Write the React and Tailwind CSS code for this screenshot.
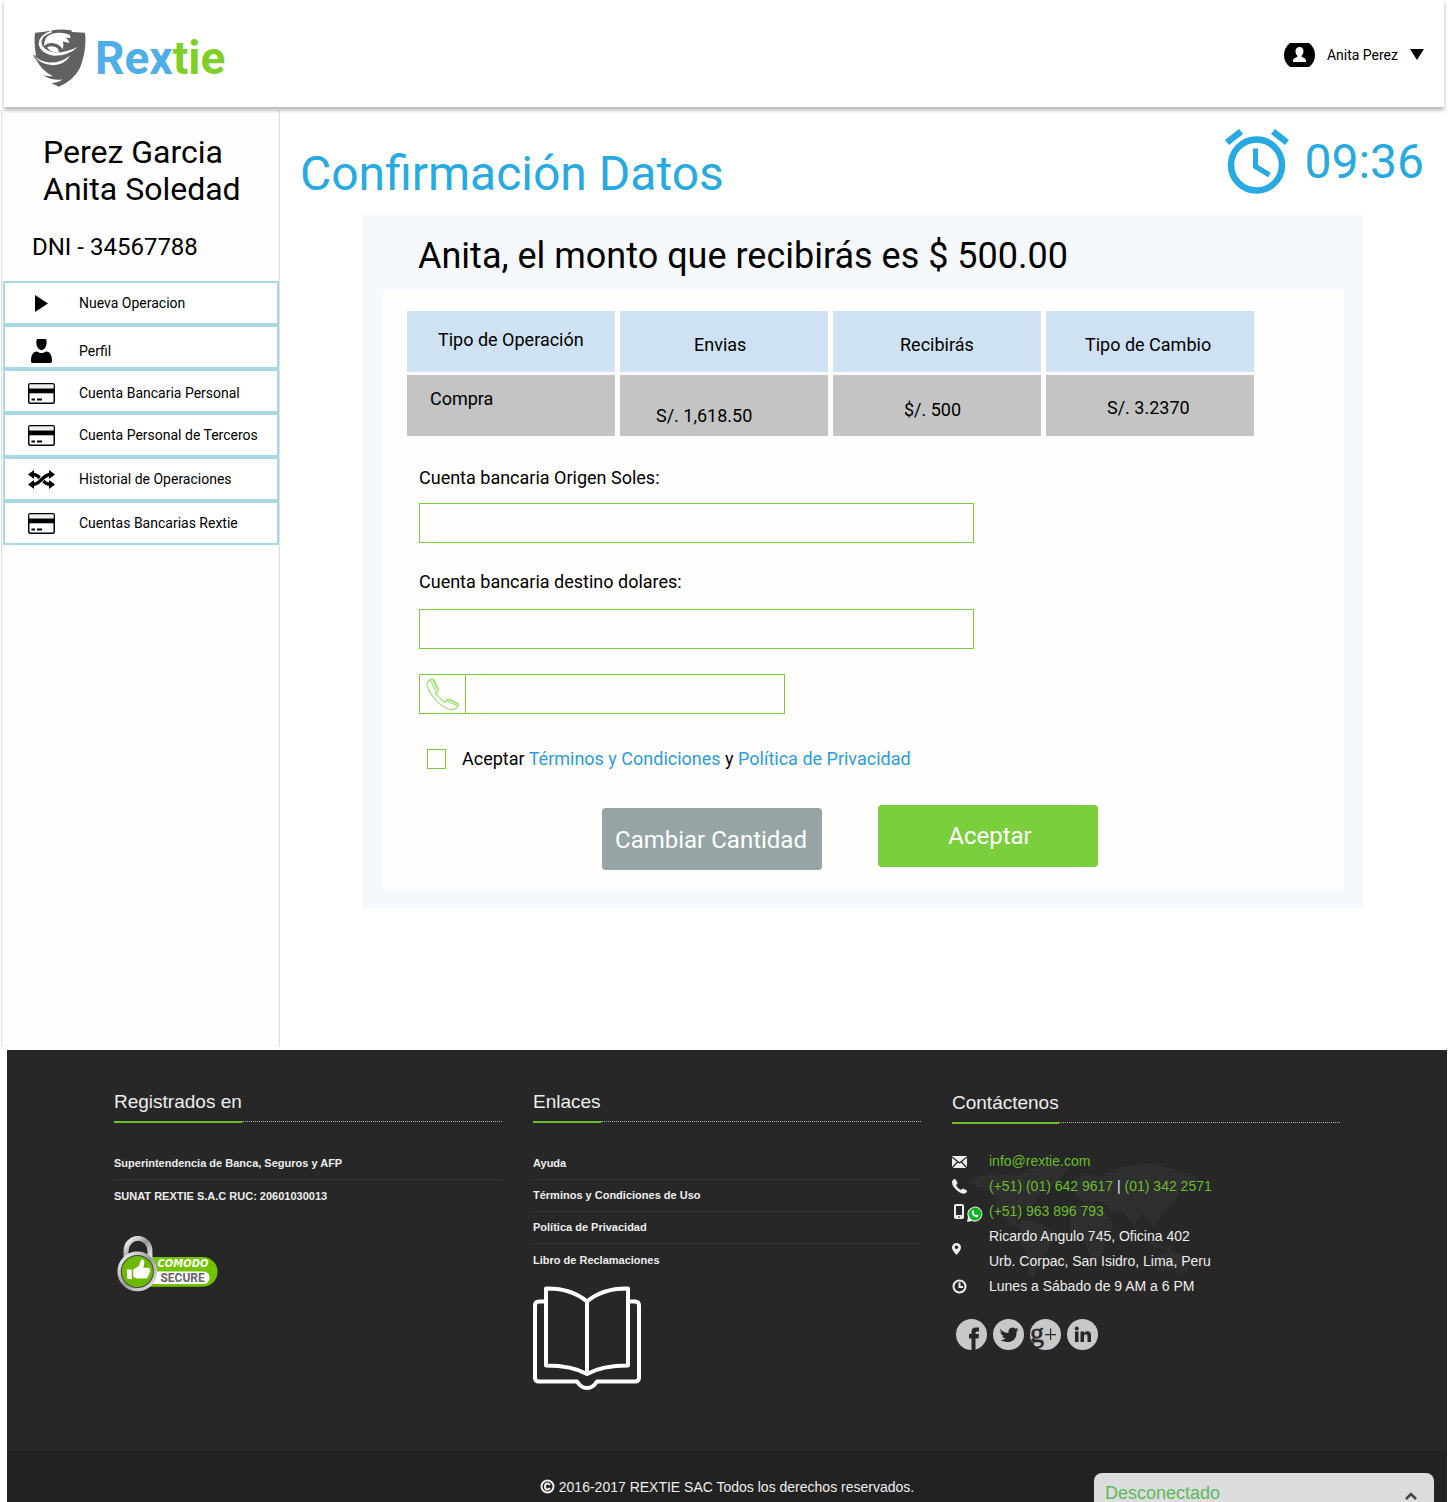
import React from "react";

const roboto = "font-[Roboto,sans-serif]";
const arial = "font-['Liberation_Sans',Arial,sans-serif]";

function Shield() {
  return (
    <svg viewBox="98 86 158 173" className="h-[58px] w-[53px] shrink-0" aria-hidden="true">
      <path fill="#636061" d="M104 97Q125 96 150 91Q180 84 212 90L214 95L253 97Q259 150 238 202Q218 240 175 258L153 248Q172 247 187 237Q150 240 128 223Q146 228 156 226Q122 208 111 182Q101 172 98 163L107 166Q100 130 104 97Z" />
      <path fill="#fff" d="M152 91Q116 103 115 130Q118 158 160 166Q205 166 232 139Q200 156 165 157Q127 151 123 128Q123 106 155 96Z" />
      <path fill="#fff" d="M132 126Q134 106 156 100Q182 93 207 103Q212 110 208 113L195 112Q204 117 207 128L187 123Q191 135 187 146Q172 126 150 128Q138 130 131 137Z" />
      <path fill="#fff" d="M140 140Q158 134 170 143Q176 149 175 157Q150 158 140 140Z" />
      <path fill="#fff" d="M99 162Q115 182 145 186Q180 188 209 165Q192 193 157 194Q118 193 99 162Z" />
    </svg>
  );
}

function CardIcon() {
  return (
    <svg viewBox="0 0 27 21" className="h-[21px] w-[27px]" aria-hidden="true">
      <rect x="0.75" y="0.75" width="25.5" height="19.5" rx="1.5" fill="#fff" stroke="#000" strokeWidth="1.500" />
      <path d="M1.500 1.500h24v3.500h-24z" fill="#eee" />
      <path d="M0 5.500h27v4.800H0z" />
      <path d="M3.500 15.500h3.500v2H3.500zM9 15.500h5v2H9z" />
    </svg>
  );
}

function PlayIcon() {
  return (
    <svg viewBox="0 0 13 17" className="h-[17px] w-[13px]" aria-hidden="true">
      <path d="M0 0l13 8.500L0 17z" />
    </svg>
  );
}

function PersonIcon() {
  return (
    <svg viewBox="0 0 21 24" className="h-6 w-[21px]" aria-hidden="true">
      <path d="M6 0h9c1 2 1 5-.2 7.500C14 9.500 12.500 11 10.500 11S7 9.500 6.200 7.500C5 5 5 2 6 0zM0 22c0-5 1.500-9.500 6-9.500 1 .8 2.500 1.500 4.500 1.500s3.500-.7 4.500-1.500c4.500 0 6 4.500 6 9.500 0 1.500-.8 2-2 2H2c-1.200 0-2-.5-2-2z" />
    </svg>
  );
}

function ShuffleIcon() {
  return (
    <svg viewBox="0 0 27 19" className="h-[19px] w-[27px]" fill="none" stroke="#000" strokeWidth="3.500" aria-hidden="true">
      <path d="M4.500 4.500C13 4 14 15 23 14.500" />
      <path d="M8 14.500C13 14 14 5 19 4.500" stroke="#fff" strokeWidth="5" />
      <path d="M4.500 14.500C13 15 14 4 23 4.500" />
      <path d="M0 4.500L6 0v9zM0 14.500L6 10v9zM27 4.500L21 0v9zM27 14.500L21 10v9z" fill="#000" stroke="none" />
    </svg>
  );
}

const menu = [
  { label: "Nueva Operacion", icon: PlayIcon, pad: "" },
  { label: "Perfil", icon: PersonIcon, pad: "pt-2" },
  { label: "Cuenta Bancaria Personal", icon: CardIcon, pad: "pt-1" },
  { label: "Cuenta Personal de Terceros", icon: CardIcon, pad: "" },
  { label: "Historial de Operaciones", icon: ShuffleIcon, pad: "" },
  { label: "Cuentas Bancarias Rextie", icon: CardIcon, pad: "" },
];

function Header() {
  return (
    <header className="relative mx-1 flex h-[107px] items-center justify-between bg-white pr-5 pl-[29px] shadow-[0_3px_4px_rgba(0,0,0,0.3)]">
      <a href="#inicio" className="flex items-center gap-[9px] pt-2">
        <Shield />
        <span className="text-[46px] leading-[58px] font-bold text-[#4faee8]">
          Rex<span className="text-[#7ed027]">tie</span>
        </span>
      </a>
      <button type="button" className="flex items-center gap-3 pt-0.5 text-sm">
        <svg viewBox="0 0 31 24" className="h-6 w-[31px]" aria-hidden="true">
          <path d="M6 0h19c4 3 6 7 6 12s-2 9-6 12H6c-4-3-6-7-6-12S2 3 6 0z" />
          <path fill="#fff" d="M15.500 4c2.600 0 4 1.700 4 4 0 2-.8 3.600-1.800 4.500v1.500c2 .8 4.300 1.500 4.300 3.500V19H9v-1.500c0-2 2.300-2.700 4.300-3.500v-1.500c-1-.9-1.800-2.500-1.800-4.500 0-2.300 1.400-4 4-4z" />
        </svg>
        <span>Anita Perez</span>
        <svg viewBox="0 0 14 11" className="h-[11px] w-[14px]" aria-hidden="true">
          <path d="M0 0h14L7 11z" />
        </svg>
      </button>
    </header>
  );
}

function Sidebar() {
  return (
    <aside className="w-[279px] shrink-0 border-x border-[#e0e0e0] bg-[#fefefe] shadow-[inset_0_0_4px_rgba(0,0,0,0.06)]">
      <h2 className="pt-6 pl-[41px] text-[32px] leading-[37px]">
        Perez Garcia
        <br />
        Anita Soledad
      </h2>
      <p className="pt-[25px] pl-[30px] text-2xl leading-7">DNI - 34567788</p>
      <nav className="mt-5 ml-px">
        <ul>
          {menu.map(({ label, icon: Icon, pad }) => (
            <li key={label}>
              <a href="#menu" className={"flex h-11 items-center border-2 border-[#a9d8e5] bg-white text-sm " + pad}>
                <span className="flex w-[74px] shrink-0 justify-center pr-0.5">
                  <Icon />
                </span>
                <span className="whitespace-nowrap">{label}</span>
              </a>
            </li>
          ))}
        </ul>
      </nav>
    </aside>
  );
}

function Clock() {
  return (
    <svg viewBox="0 0 64 65" className="h-[65px] w-16" fill="none" stroke="#27aae1" aria-hidden="true">
      <circle cx="31.500" cy="36" r="25.500" strokeWidth="6.500" />
      <path d="M30.500 19.500v18l14 8.500" strokeWidth="5" />
      <path d="M2 13.500L16 2.500M62 13.500L48 2.500" strokeWidth="6.500" />
    </svg>
  );
}

const th = "h-[61px] w-[208px] bg-[#cfe2f3] p-0 text-left align-top font-normal leading-6 ";
const td = "h-[61px] w-[208px] bg-[#c4c4c4] p-0 text-left align-top leading-6 ";

function Confirmation() {
  return (
    <section className="mr-[85px] ml-[82px] bg-[#f5f9fd] pr-[19px] pb-[19px] pl-[21px]">
      <h2 className="pt-5 pb-3 pl-[35px] text-4xl leading-[42px]">Anita, el monto que recibirás es $ 500.00</h2>
      <form className="bg-[#fffefd] px-[19px] py-[19px] text-lg">
        <table className="border-separate border-spacing-x-[5px] border-spacing-y-[3px]">
          <thead>
            <tr>
              <th className={th + "pt-[17px] pl-[31px]"}>Tipo de Operación</th>
              <th className={th + "pt-[22px] pl-[74px]"}>Envias</th>
              <th className={th + "pt-[22px] pl-[67px]"}>Recibirás</th>
              <th className={th + "pt-[22px] pl-[39px]"}>Tipo de Cambio</th>
            </tr>
          </thead>
          <tbody>
            <tr>
              <td className={td + "pt-3 pl-[23px]"}>Compra</td>
              <td className={td + "pt-[29px] pl-9"}>S/. 1,618.50</td>
              <td className={td + "pt-[23px] pl-[71px]"}>$/. 500</td>
              <td className={td + "pt-[21px] pl-[61px]"}>S/. 3.2370</td>
            </tr>
          </tbody>
        </table>
        <div className="pl-[17px]">
          <label htmlFor="origen" className="mt-[27px] block leading-6">Cuenta bancaria Origen Soles:</label>
          <input id="origen" type="text" className="mt-[13px] block h-10 w-full max-w-[555px] border border-[#7acd3d] bg-transparent px-3 outline-none" />
          <label htmlFor="destino" className="mt-[27px] block leading-6">Cuenta bancaria destino dolares:</label>
          <input id="destino" type="text" className="mt-[15px] block h-10 w-full max-w-[555px] border border-[#7acd3d] bg-transparent px-3 outline-none" />
          <div className="mt-[25px] flex h-10 w-full max-w-[366px] border border-[#7acd3d]">
            <label htmlFor="telefono" aria-label="Teléfono" className="flex w-[46px] shrink-0 items-center justify-center border-r border-[#7acd3d]">
              <svg viewBox="0 0 33 33" className="h-[33px] w-[33px]" fill="none" stroke="#9be070" strokeWidth="1.200" strokeLinejoin="round" aria-hidden="true">
                <path d="M4 1.500Q6 0 8 2l4.500 9q.5 2-1.500 3-1.500 1 0 3 3 4 7 6.500 1.500 1 2.500-.5 1.500-2.500 3.500-1.500l7 3.500q2 1 1 3-2 4.500-8 3.500Q15 29 8 20 .5 10 1 6q.5-3 3-4.500z" />
                <path d="M4 1.500l6 12M6.500 1.500l5 10M31.500 28l-11-5.500M31.500 26l-9-4.500M11 14q-2 1-1 3M19 24q1-2 3-2" />
              </svg>
            </label>
            <input id="telefono" type="tel" className="min-w-0 flex-1 bg-transparent px-3 outline-none" />
          </div>
          <div className="mt-[33px] flex items-center gap-4 pl-2 leading-6">
            <input id="acepto" type="checkbox" className="h-5 w-[19px] appearance-none border border-[#7acd3d] checked:bg-[#7acd3d]" />
            <label htmlFor="acepto">
              Aceptar <a href="#terminos" className="text-[#2d9cdb]">Términos y Condiciones</a> y{" "}
              <a href="#privacidad" className="text-[#2d9cdb]">Política de Privacidad</a>
            </label>
          </div>
        </div>
        <div className="mt-[34px] flex gap-14 pl-[200px] text-2xl text-white">
          <button type="button" className="mt-[3px] h-[62px] w-[220px] rounded bg-[#95a5a5] pt-0.5 pr-0.5">Cambiar Cantidad</button>
          <button type="submit" className="h-[62px] w-[220px] rounded bg-[#7bcf3d] pl-1">Aceptar</button>
        </div>
      </form>
    </section>
  );
}

function FooterTitle({ children }) {
  return (
    <h3 className="flex h-[33px] text-[19px] leading-6">
      <span className="border-b-2 border-[#6abf2a]">{children}</span>
      <span className="mb-px flex-1 border-b border-dotted border-[#aaa]" />
    </h3>
  );
}

function FooterLinks({ items }) {
  return (
    <ul className="mt-[25px] text-[11px] font-bold">
      {items.map((item, i) => (
        <li key={item} className={"flex h-8 items-center " + (i < items.length - 1 ? "border-b border-[#363636]" : "")}>
          <a href="#enlace">{item}</a>
        </li>
      ))}
    </ul>
  );
}

function Comodo() {
  return (
    <svg viewBox="0 0 304 172" className="mt-6 ml-[3px] h-[57px] w-[101px]" role="img" aria-label="Comodo Secure">
      <defs>
        <linearGradient id="metal" x1="0" x2="1" y1="0" y2="1">
          <stop offset="0" stopColor="#fff" />
          <stop offset="0.5" stopColor="#999" />
          <stop offset="1" stopColor="#eee" />
        </linearGradient>
      </defs>
      <path d="M90 63h168a45 45 0 0 1 0 90H90z" fill="#74c300" />
      <path d="M90 107h170a19 19 0 0 1 0 38H90z" fill="#fff" />
      <path d="M27 72V45a36 38 0 0 1 72 0v27" fill="none" stroke="url(#metal)" strokeWidth="15" />
      <circle cx="61" cy="107" r="55" fill="#444" stroke="url(#metal)" strokeWidth="10" />
      <circle cx="61" cy="107" r="47" fill="#6db800" />
      <path fill="#fff" d="M29 101h15v29H31zM48 102l18-12 5-15q2-6 8-3 5 4 2 15l-2 9h15q6 1 5 7 2 5-2 9 1 5-4 8 0 8-7 8H59l-10-5z" />
      <text x="122" y="95" fill="#fff" fontFamily="DejaVu Sans" fontSize="30" fontWeight="bold" fontStyle="italic">COMODO</text>
      <text x="131" y="139" fill="#666" fontFamily="Roboto" fontSize="36" fontWeight="bold">SECURE</text>
    </svg>
  );
}

function Book() {
  return (
    <svg viewBox="0 0 108 104" className="mt-[10px] h-[104px] w-[108px]" fill="none" stroke="#fff" strokeWidth="4" strokeLinejoin="round" aria-hidden="true">
      <path d="M13 2.500Q38 2 54 15.500 70 2 95 2.500v77Q69 79.500 54 88 39 79.500 13 79.500zM54 15v72" />
      <path d="M11 15.500H6q-4 0-4 4v72q0 4 4 4h38Q48 102 54 102t10-6.500h38q4 0 4-4v-72q0-4-4-4h-5" />
    </svg>
  );
}

const continents =
  "M8 20l20-8 30 2 18-8 22-4 10 8-14 14-12 2-6 16-14 6-8 10 6 8-10-2-12-14-6-20-14-4zM62 58l18 4 16 12-8 14-10 12-4 18-6-4-2-22-8-16zM112 20l12-8 16 4 20-10 30-4 44 12 4 8-18 6-6 14-12 10-6 14-8-6-6-8-8 14-10-14-14-2-8-10-16 2-10-6zM110 46l20-4 16 8 8 16-8 8-4 22-10 4-8-22-14-8zM188 78l16 8 12-2-8 6-18-6zM196 96l14-6 14 4 6 12-8 8-10-6-14 2z";

function WorldMap() {
  return (
    <svg viewBox="0 0 240 120" className="absolute top-3 left-2 h-[120px] w-60" aria-hidden="true">
      <defs>
        <pattern id="dots" width="3" height="3" patternUnits="userSpaceOnUse">
          <rect width="3" height="3" fill="#2c2c2c" />
          <rect width="2" height="2" fill="#313131" />
        </pattern>
      </defs>
      <path fill="url(#dots)" d={continents} />
    </svg>
  );
}

function Contact() {
  const icon = "h-[15px] w-[15px]";
  return (
    <div className="relative mt-[25px] text-sm">
      <WorldMap />
      <ul className="relative leading-[25px]">
        <li className="flex items-center">
          <span className="w-[37px]">
            <svg viewBox="0 0 15 12" className="h-3 w-[15px]" aria-hidden="true">
              <path fill="#eee" d="M0 0h15v12H0z" />
              <path d="M0 1l7.500 6L15 1M0 12l5.500-6M15 12L9.500 6" fill="none" stroke="#272727" strokeWidth="1.300" />
            </svg>
          </span>
          <a href="mailto:info@rextie.com" className="text-[#6abf2a]">info@rextie.com</a>
        </li>
        <li className="flex items-center">
          <span className="w-[37px]">
            <svg viewBox="0 0 15 15" className={icon} aria-hidden="true">
              <path fill="#eee" d="M1 1q2-2 3 0l1.500 3q0 1-1.500 2 1 3 5 5 1-1.500 2-1.500l3 1.500q2 1 0 3-3 2-7-1Q0 8 0 3q0-1 1-2z" />
            </svg>
          </span>
          <span>
            <a href="tel:+5116429617" className="text-[#6abf2a]">(+51) (01) 642 9617</a> | <a href="tel:013422571" className="text-[#6abf2a]">(01) 342 2571</a>
          </span>
        </li>
        <li className="flex items-center">
          <span className="flex w-[37px] items-center gap-[3px] pl-0.5">
            <svg viewBox="0 0 10 15" className="h-[15px] w-[10px]" aria-hidden="true">
              <rect width="10" height="15" rx="2" fill="#eee" />
              <path d="M2 2h6v9H2zM4 12.500h2v1H4z" fill="#272727" />
            </svg>
            <svg viewBox="0 0 16 16" className="mt-1 h-4 w-4" aria-hidden="true">
              <path d="M0 16l1-5a7.500 7.500 0 1 1 4 4z" fill="#eee" />
              <circle cx="8" cy="8" r="6.500" fill="#0bb51c" />
              <path d="M5 4.500q1-1 1.800.5l.4 1.200-.7.9q.8 1.500 2.300 2.200l.9-.8 1.700.8q.6.700-.6 1.700-1.500 1-4-.9Q3.800 7.500 5 4.500z" fill="#fff" />
            </svg>
          </span>
          <a href="tel:+51963896793" className="text-[#6abf2a]">(+51) 963 896 793</a>
        </li>
        <li className="flex items-center">
          <span className="w-[37px]">
            <svg viewBox="0 0 9 12" className="h-3 w-[9px]" aria-hidden="true">
              <path fillRule="evenodd" fill="#eee" d="M4.500 0A4.500 4.500 0 0 1 9 4.500Q9 7 4.500 12 0 7 0 4.500A4.500 4.500 0 0 1 4.500 0zm0 2.500a1.800 1.800 0 1 0 0 3.600 1.800 1.800 0 0 0 0-3.600z" />
            </svg>
          </span>
          <address className="not-italic">
            Ricardo Angulo 745, Oficina 402
            <br />
            Urb. Corpac, San Isidro, Lima, Peru
          </address>
        </li>
        <li className="flex items-center">
          <span className="w-[37px]">
            <svg viewBox="0 0 15 15" className={icon} fill="none" stroke="#eee" strokeWidth="2" aria-hidden="true">
              <circle cx="7.500" cy="7.500" r="6" />
              <path d="M7.500 3.500V8H11" />
            </svg>
          </span>
          <span>Lunes a Sábado de 9 AM a 6 PM</span>
        </li>
      </ul>
    </div>
  );
}

function Social() {
  const link = "block h-[31px] w-[31px] rounded-full bg-[#c8c8c8]";
  const svg = "h-[31px] w-[31px] overflow-visible";
  return (
    <div className="mt-5 ml-1 flex gap-[6px]">
      <a href="#facebook" aria-label="Facebook" className={link}>
        <svg viewBox="0 0 31 31" className={svg} fill="#272727">
          <path d="M15.500 31V19.500H13V15h2.500v-2.500Q15.500 8.500 20 8.500h3v4h-2q-1.500 0-1.500 1.500v1h3.500l-.5 4.500h-3V31z" />
        </svg>
      </a>
      <a href="#twitter" aria-label="Twitter" className={link}>
        <svg viewBox="0 0 31 31" className={svg} fill="#272727">
          <path d="M7 10q4 4 8.500 4-.5-5 4-5.500 2 0 3 1.200l2.500-.9-1.300 2.300 1.800-.3-2 2Q24 20 18 22.500q-6 1.500-10.500-1.500 3 0 5-1.500-2.500-.3-3.300-2.700h1.600Q7.500 15.500 7.500 13l1.700.4Q6.500 12 7 10z" />
        </svg>
      </a>
      <a href="#googleplus" aria-label="Google Plus" className={link}>
        <svg viewBox="0 0 31 31" className={svg} fill="#272727">
          <text x="0" y="23" fontFamily="Liberation Serif" fontSize="28" stroke="#272727" strokeWidth="0.600">g</text>
          <path d="M20 9.500h1.200V15H26v1.200h-4.800V21H20v-4.800h-4.800V15H20z" />
        </svg>
      </a>
      <a href="#linkedin" aria-label="LinkedIn" className={link}>
        <svg viewBox="0 0 31 31" className={svg} fill="#272727">
          <path d="M8 12.500h3.500V23H8zM13.500 12.500H17V14q1.200-1.800 3.300-1.800 3.700 0 3.700 4.300V23h-3.500v-5.800q0-2-1.500-2-2 0-2 2.300V23h-3.500z" />
          <circle cx="9.750" cy="9.500" r="2" />
        </svg>
      </a>
    </div>
  );
}

function Footer() {
  return (
    <footer className={"relative mt-[3px] mr-px ml-[7px] overflow-hidden bg-[#272727] text-[#eee] " + arial}>
      <div className="mx-auto grid min-h-[401px] max-w-[1226px] grid-cols-3 gap-[31px] pt-10">
        <section>
          <FooterTitle>Registrados en</FooterTitle>
          <FooterLinks items={["Superintendencia de Banca, Seguros y AFP", "SUNAT REXTIE S.A.C RUC: 20601030013"]} />
          <Comodo />
        </section>
        <section>
          <FooterTitle>Enlaces</FooterTitle>
          <FooterLinks items={["Ayuda", "Términos y Condiciones de Uso", "Política de Privacidad", "Libro de Reclamaciones"]} />
          <Book />
        </section>
        <section className="pt-px">
          <FooterTitle>Contáctenos</FooterTitle>
          <Contact />
          <Social />
        </section>
      </div>
      <div className="flex h-[51px] items-center justify-center gap-1 bg-[#222] pt-5 text-sm">
        <svg viewBox="0 0 15 15" className="h-[15px] w-[15px]" fill="none" stroke="#eee" strokeWidth="2" aria-hidden="true">
          <circle cx="7.500" cy="7.500" r="6" />
          <path d="M10 6q-1-1.500-2.500-1.500-2.500 0-2.500 3t2.500 3Q9 10.500 10 9" />
        </svg>
        <span>2016-2017 REXTIE SAC Todos los derechos reservados.</span>
      </div>
      <button type="button" className="absolute right-[13px] bottom-0 flex h-[29px] w-[340px] items-start justify-between rounded-t-lg bg-[#ddd] pt-2 pr-[17px] pl-[11px] text-lg leading-6 text-[#5cb85c]">
        <span>Desconectado</span>
        <svg viewBox="0 0 12 8" className="mt-[11px] h-2 w-3" fill="none" stroke="#444" strokeWidth="2.500" aria-hidden="true">
          <path d="M1 7l5-5 5 5" />
        </svg>
      </button>
    </footer>
  );
}

export default function App() {
  return (
    <div className={"bg-white text-black " + roboto}>
      <Header />
      <div className="flex min-h-[940px] pt-[3px] pl-px">
        <Sidebar />
        <main className="min-w-0 flex-1">
          <div className="flex items-start justify-between pt-[19px] pr-6 pb-[13px] pl-5 text-5xl text-[#27aae1]">
            <h1 className="pt-[17px] leading-[56px]">Confirmación Datos</h1>
            <div className="flex items-start gap-[15px]">
              <Clock />
              <time className="pt-[5px] leading-[56px]">09:36</time>
            </div>
          </div>
          <Confirmation />
        </main>
      </div>
      <Footer />
    </div>
  );
}
